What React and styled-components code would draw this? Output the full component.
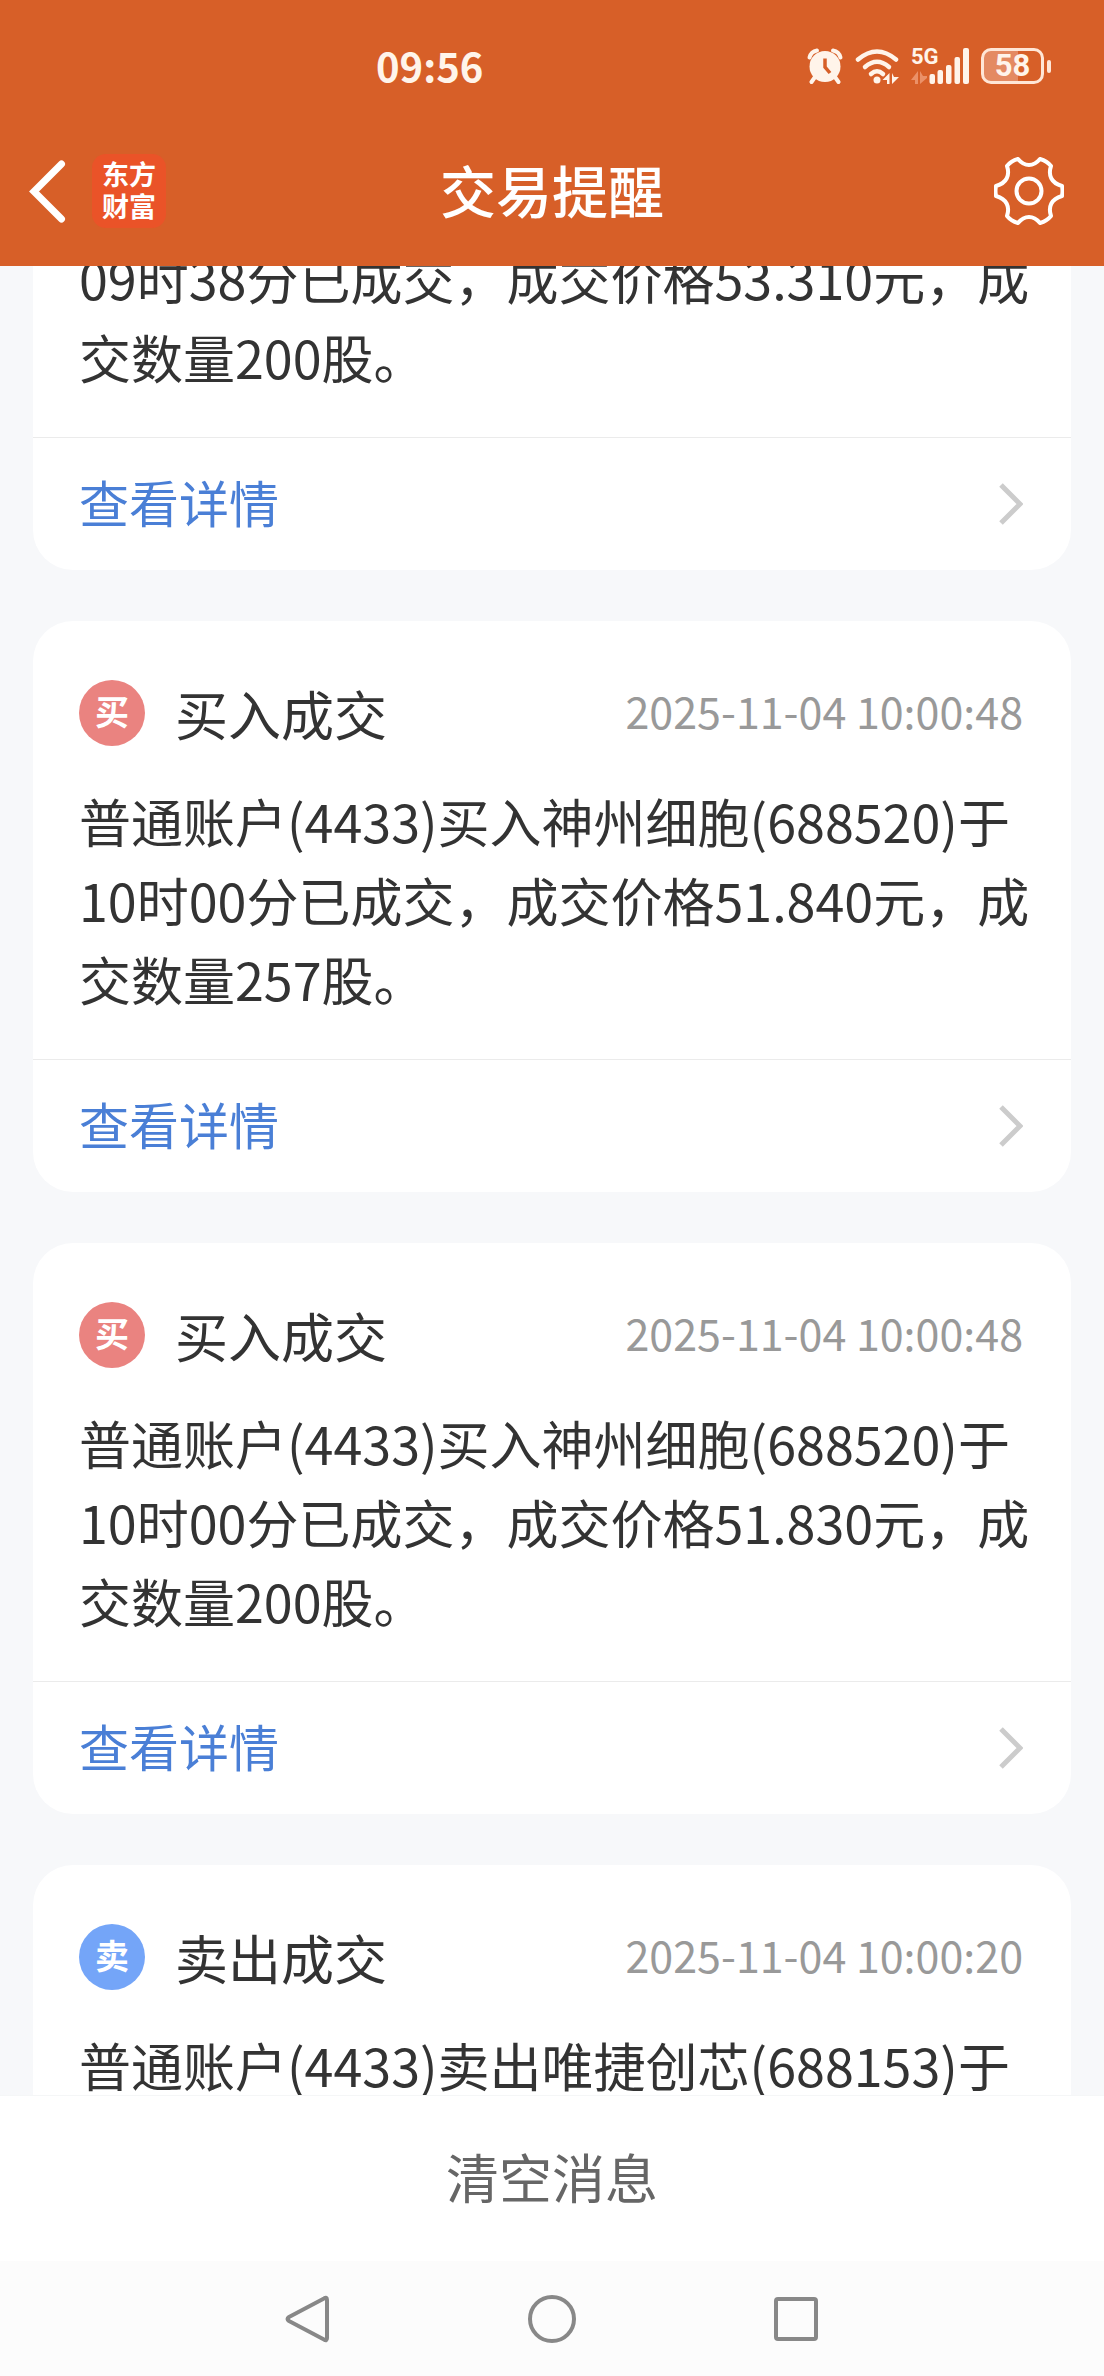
import React, { useLayoutEffect, useRef } from "react";
import styled, { createGlobalStyle } from "styled-components";

const GlobalStyle = createGlobalStyle`
  * { box-sizing: border-box; }
  body {
    margin: 0;
    background: #f7f8fa;
    font-family: "Noto Sans CJK SC", sans-serif;
    color: #333;
  }
  button {
    border: 0;
    padding: 0;
    background: none;
    font: inherit;
    color: inherit;
    cursor: pointer;
  }
  svg { display: block; }
  h1, h2, p { margin: 0; font-weight: 400; }
`;

const Screen = styled.div`
  display: flex;
  flex-direction: column;
  height: 100vh;
`;

const TopArea = styled.header`
  flex: none;
  padding-bottom: 16px;
  background: #d75f28;
  color: #fff;
`;

const StatusBar = styled.div`
  display: flex;
  align-items: center;
  justify-content: space-between;
  height: 132px;
  padding: 0 53px 0 376px;
  color: #fff4ea;
`;

const Clock = styled.time`
  padding-bottom: 2px;
  font-size: 40px;
  line-height: 48px;
  font-weight: 700;
`;

const StatusIcons = styled.div`
  display: flex;
  align-items: center;
  gap: 12px;
`;

const Signal = styled.div`
  position: relative;
`;

const NetworkType = styled.span`
  position: absolute;
  top: -2px;
  left: 0;
  font-family: Roboto, sans-serif;
  font-size: 22px;
  line-height: 22px;
  font-weight: 700;
`;

const BatteryWrap = styled.div`
  display: flex;
  align-items: center;
  gap: 3px;
`;

const BatteryBody = styled.div`
  display: flex;
  align-items: center;
  justify-content: center;
  width: 63px;
  height: 36px;
  border: 3px solid #ffe6d6;
  border-radius: 10px;
  background: linear-gradient(to right, #e48a62 60%, transparent 60%);
  font-family: Roboto, sans-serif;
  font-size: 31px;
  line-height: 30px;
  font-weight: 700;
`;

const BatteryTip = styled.div`
  width: 4px;
  height: 13px;
  border-radius: 2px;
  background: #ffe6d6;
`;

const AppBar = styled.div`
  display: grid;
  grid-template-columns: 1fr auto 1fr;
  align-items: center;
  height: 118px;
  padding: 0 28px;
`;

const AppBarStart = styled.div`
  display: flex;
  align-items: center;
  gap: 24px;
`;

const Logo = styled.div`
  width: 74px;
  height: 74px;
  padding: 4px 0;
  border-radius: 14px;
  background: #ea5328;
  font-size: 27px;
  line-height: 32px;
  font-weight: 700;
  text-align: center;
`;

const PageTitle = styled.h1`
  padding-bottom: 4px;
  font-size: 56px;
  line-height: 64px;
  font-weight: 500;
`;

const SettingsButton = styled.button`
  justify-self: end;
  margin-right: 12px;
`;

const Scroller = styled.main`
  flex: 1;
  min-height: 0;
  overflow-y: auto;
  scrollbar-width: none;
  background: #f7f8fa;
`;

const MessageList = styled.div`
  display: flex;
  flex-direction: column;
  gap: 51px;
  padding: 0 33px;
`;

const Card = styled.article`
  border-radius: ${(p) => (p.$continued ? "0 0 40px 40px" : "40px")};
  background: #fff;
`;

const CardHead = styled.div`
  display: flex;
  align-items: center;
  padding: 59px 48px 35px 46px;
`;

const Badge = styled.span`
  flex: none;
  width: 66px;
  height: 66px;
  border-radius: 50%;
  background: ${(p) => (p.$kind === "buy" ? "#ea8380" : "#74a5f8")};
  color: #fff;
  font-size: 34px;
  line-height: 62px;
  font-weight: 700;
  text-align: center;
`;

const CardTitle = styled.h2`
  margin-left: 30px;
  font-size: 53px;
  line-height: 66px;
`;

const Stamp = styled.time`
  margin-left: auto;
  padding-bottom: 6px;
  color: #999;
  font-size: 43px;
  line-height: 60px;
`;

const Message = styled.p`
  padding: 0 38px 41px 46px;
  font-size: 52px;
  line-height: 79px;
`;

const DetailLink = styled.a`
  display: flex;
  align-items: center;
  justify-content: space-between;
  height: 133px;
  padding: 0 48px 0 46px;
  border-top: 1px solid #ebebeb;
  color: #4a7fd6;
  text-decoration: none;
`;

const DetailLabel = styled.span`
  padding-bottom: 6px;
  font-size: 50px;
  line-height: 64px;
`;

const ClearButton = styled.button`
  flex: none;
  height: 166px;
  padding-bottom: 6px;
  border-top: 1px solid #f5f6f7;
  background: #fff;
  color: #666;
  font-size: 53px;
  line-height: 64px;
`;

const SystemNav = styled.nav`
  display: flex;
  flex: none;
  align-items: center;
  justify-content: center;
  gap: 194px;
  height: 115px;
  background: #fcfcfc;
  color: #888;
`;

const AlarmIcon = () => (
  <svg width="36" height="36" viewBox="0 0 36 36" fill="none" aria-hidden="true">
    <circle cx="18" cy="18.5" r="15.5" fill="currentColor" />
    <path d="M2.5 9.5Q4 3.500 10 2.500M33.500 9.500Q32 3.500 26 2.500" stroke="currentColor" strokeWidth="4" strokeLinecap="round" />
    <path d="M8 29L4.500 34M28 29L31.500 34" stroke="currentColor" strokeWidth="4" strokeLinecap="round" />
    <path d="M18 10.500V19L23 25" stroke="#d75f28" strokeWidth="3.500" />
  </svg>
);

const WifiIcon = () => (
  <svg width="44" height="36" viewBox="0 0 44 36" fill="none" aria-hidden="true">
    <g stroke="currentColor" strokeWidth="4.500" strokeLinecap="round">
      <path d="M3 11.500Q22 -4.500 41 11.500" />
      <path d="M10 19Q22 8.500 34 19" />
      <path d="M16 26Q22 20.500 28 26" />
    </g>
    <circle cx="22" cy="32" r="3.500" fill="currentColor" />
    <path d="M34.500 25V36H32V32H27.500ZM37 36V25L39 29H44Z" fill="currentColor" />
  </svg>
);

const SignalIcon = () => (
  <svg width="58" height="36" viewBox="0 0 58 36" aria-hidden="true">
    <path d="M7 23V36H4V32H0ZM9 36V23L12 28H16V30Z" fill="#eb9168" />
    <g fill="currentColor">
      <rect x="18.500" y="26" width="5.500" height="10" rx="2" />
      <rect x="26.500" y="22" width="5.500" height="14" rx="2" />
      <rect x="35" y="17" width="5.500" height="19" rx="2" />
      <rect x="43.500" y="9" width="5.500" height="27" rx="2" />
      <rect x="52" y="0" width="6" height="36" rx="2" />
    </g>
  </svg>
);

const BackIcon = () => (
  <svg width="40" height="64" viewBox="0 0 40 64" fill="none" aria-hidden="true">
    <path d="M33.500 5L6 32.500L33.500 60" stroke="currentColor" strokeWidth="7" strokeLinecap="round" />
  </svg>
);

const GearIcon = () => (
  <svg width="70" height="68" viewBox="0 0 70 68" fill="none" stroke="currentColor" strokeWidth="4" strokeLinejoin="round" aria-hidden="true">
    <path d="M24 2Q29 8 35 8Q41 8 46 2Q53 4 57 9C54 18 57 26 68 29Q69 34 68 39C57 42 54 50 57 59Q53 64 46 66Q41 60 35 60Q29 60 24 66Q17 64 13 59C16 50 13 42 2 39Q1 34 2 29C13 26 16 18 13 9Q17 4 24 2Z" />
    <circle cx="35" cy="34" r="12.500" />
  </svg>
);

const ChevronIcon = () => (
  <svg width="24" height="42" viewBox="0 0 24 42" fill="none" aria-hidden="true">
    <path d="M2 2L21 21L2 40" stroke="#ccc" strokeWidth="5" />
  </svg>
);

const navShapes = [
  { label: "返回", shape: <path d="M41 4.500Q44 2.500 44 6V44Q44 47.500 41 45.500L6 27Q3 25 6 23Z" /> },
  { label: "主页", shape: <circle cx="25" cy="25" r="22" /> },
  { label: "最近任务", shape: <rect x="5" y="5" width="40" height="40" rx="2" /> },
];

const messages = [
  { text: "09时38分已成交，成交价格53.310元，成交数量200股。", continued: true, detail: true },
  {
    kind: "buy",
    title: "买入成交",
    time: "2025-11-04 10:00:48",
    text: "普通账户(4433)买入神州细胞(688520)于10时00分已成交，成交价格51.840元，成交数量257股。",
    detail: true,
  },
  {
    kind: "buy",
    title: "买入成交",
    time: "2025-11-04 10:00:48",
    text: "普通账户(4433)买入神州细胞(688520)于10时00分已成交，成交价格51.830元，成交数量200股。",
    detail: true,
  },
  {
    kind: "sell",
    title: "卖出成交",
    time: "2025-11-04 10:00:20",
    text: "普通账户(4433)卖出唯捷创芯(688153)于",
  },
];

function MessageCard({ kind, title, time, text, continued, detail }) {
  return (
    <Card $continued={continued}>
      {title && (
        <CardHead>
          <Badge $kind={kind}>{kind === "buy" ? "买" : "卖"}</Badge>
          <CardTitle>{title}</CardTitle>
          <Stamp>{time}</Stamp>
        </CardHead>
      )}
      <Message>{text}</Message>
      {detail && (
        <DetailLink href="#detail">
          <DetailLabel>查看详情</DetailLabel>
          <ChevronIcon />
        </DetailLink>
      )}
    </Card>
  );
}

export default function App() {
  const scroller = useRef(null);

  // The list opens part-way through its first message.
  useLayoutEffect(() => {
    scroller.current.scrollTop = 28;
  }, []);

  return (
    <Screen>
      <GlobalStyle />
      <TopArea>
        <StatusBar>
          <Clock>09:56</Clock>
          <StatusIcons>
            <AlarmIcon />
            <WifiIcon />
            <Signal>
              <SignalIcon />
              <NetworkType>5G</NetworkType>
            </Signal>
            <BatteryWrap>
              <BatteryBody>58</BatteryBody>
              <BatteryTip />
            </BatteryWrap>
          </StatusIcons>
        </StatusBar>
        <AppBar>
          <AppBarStart>
            <button aria-label="返回">
              <BackIcon />
            </button>
            <Logo>
              东方
              <br />
              财富
            </Logo>
          </AppBarStart>
          <PageTitle>交易提醒</PageTitle>
          <SettingsButton aria-label="设置">
            <GearIcon />
          </SettingsButton>
        </AppBar>
      </TopArea>
      <Scroller ref={scroller}>
        <MessageList>
          {messages.map((m, i) => (
            <MessageCard key={i} {...m} />
          ))}
        </MessageList>
      </Scroller>
      <ClearButton>清空消息</ClearButton>
      <SystemNav>
        {navShapes.map((n) => (
          <button key={n.label} aria-label={n.label}>
            <svg width="50" height="50" viewBox="0 0 50 50" fill="none" stroke="currentColor" strokeWidth="4" strokeLinejoin="round" aria-hidden="true">
              {n.shape}
            </svg>
          </button>
        ))}
      </SystemNav>
    </Screen>
  );
}
